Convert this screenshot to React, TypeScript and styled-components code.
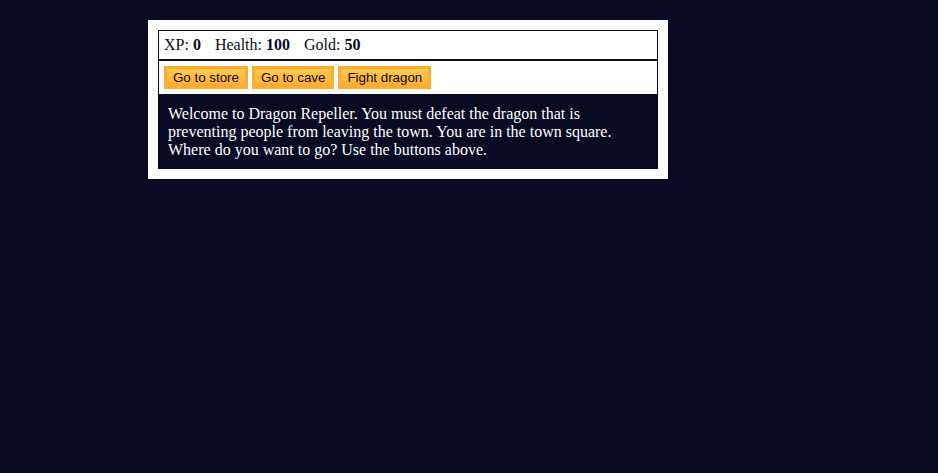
import React from "react";
import styled, { createGlobalStyle } from "styled-components";

const Global = createGlobalStyle`
  html, body {
    margin: 0;
    padding: 0;
    background-color: #0a0a23;
    font-family: "Liberation Serif", "Times New Roman", serif;
    font-size: 16px;
  }
`;

const Page = styled.div`
  padding: 20px 0 0 148px;
  min-height: 100vh;
  box-sizing: border-box;
`;

const Game = styled.div`
  width: 500px;
  background-color: #ffffff;
  color: #ffffff;
  padding: 10px;
`;

const Box = styled.div`
  border: 1px solid #0a0a23;
  padding: 5px;
  color: #0a0a23;
  line-height: normal;
`;

const Stat = styled.span`
  padding-right: 10px;
`;

const Controls = styled(Box)`
  display: flex;
  gap: 4px;
`;

const Button = styled.button`
  cursor: pointer;
  color: #0a0a23;
  background-color: #feac32;
  background-image: linear-gradient(#fecc4c, #ffac33);
  border: 3px solid #feac32;
  font-family: "Liberation Sans", Arial, sans-serif;
  font-size: 13.3333px;
  padding: 1px 6px;
  margin: 0;
  line-height: normal;
`;

const Text = styled.div`
  background-color: #0a0a23;
  color: #ffffff;
  padding: 10px;
`;

export default function App() {
  return (
    <>
      <Global />
      <Page>
        <Game>
          <Box>
            <Stat>
              XP: <strong>0</strong>
            </Stat>{" "}
            <Stat>
              Health: <strong>100</strong>
            </Stat>{" "}
            <Stat>
              Gold: <strong>50</strong>
            </Stat>
          </Box>
          <Controls>
            <Button>Go to store</Button>
            <Button>Go to cave</Button>
            <Button>Fight dragon</Button>
          </Controls>
          <Text>
            Welcome to Dragon Repeller. You must defeat the dragon that is
            preventing people from leaving the town. You are in the town
            square. Where do you want to go? Use the buttons above.
          </Text>
        </Game>
      </Page>
    </>
  );
}
